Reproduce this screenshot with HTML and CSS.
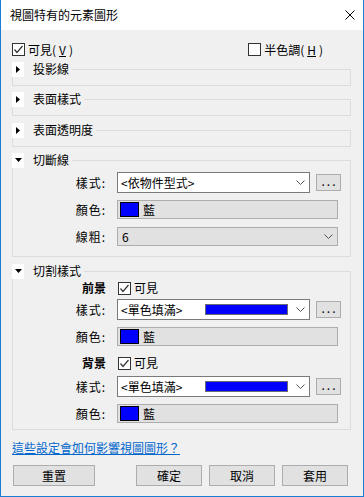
FILE: index.html
```html
<!DOCTYPE html>
<html lang="zh-Hant">

<head>
    <meta charset="UTF-8">
    <title>視圖特有的元素圖形</title>
    <link rel="stylesheet" href="styles.css">
</head>

<body>
    <div class="dialog">
        <!-- Title bar -->
        <div class="titlebar">
            <span class="title">視圖特有的元素圖形</span>
            <svg class="close" width="10" height="10" viewBox="0 0 10 10">
                <path d="M0.5 0.5 L9.5 9.5 M9.5 0.5 L0.5 9.5" stroke="#000" stroke-width="1" fill="none" />
            </svg>
        </div>

        <div class="content">
            <!-- Visible / halftone -->
            <div class="top-row">
                <label class="check">
                    <span class="box"><svg width="11" height="11" viewBox="0 0 11 11"><path d="M1.5 5.5 L4 8.5 L9.5 2" stroke="#333" stroke-width="1.2" fill="none" /></svg></span>
                    可見(<u>V</u>)
                </label>
                <label class="check halftone">
                    <span class="box"></span>
                    半色調(<u>H</u>)
                </label>
            </div>

            <!-- Collapsed groups -->
            <div class="group">
                <div class="group-head">
                    <span class="arrow"><svg width="4" height="7" viewBox="0 0 4 7"><path d="M0 0 L4 3.5 L0 7 Z" fill="#000" /></svg></span>
                    <span class="group-title">投影線</span>
                </div>
            </div>

            <div class="group">
                <div class="group-head">
                    <span class="arrow"><svg width="4" height="7" viewBox="0 0 4 7"><path d="M0 0 L4 3.5 L0 7 Z" fill="#000" /></svg></span>
                    <span class="group-title">表面樣式</span>
                </div>
            </div>

            <div class="group wide">
                <div class="group-head">
                    <span class="arrow"><svg width="4" height="7" viewBox="0 0 4 7"><path d="M0 0 L4 3.5 L0 7 Z" fill="#000" /></svg></span>
                    <span class="group-title">表面透明度</span>
                </div>
            </div>

            <!-- Cut lines -->
            <div class="group open cut-lines">
                <div class="group-head">
                    <span class="arrow"><svg width="7" height="4" viewBox="0 0 7 4"><path d="M0 0 L7 0 L3.5 4 Z" fill="#000" /></svg></span>
                    <span class="group-title">切斷線</span>
                </div>
                <div class="row first">
                    <span class="label">樣式:</span>
                    <div class="select">
                        <span>&lt;依物件型式&gt;</span>
                        <svg class="chevron" width="9" height="5" viewBox="0 0 9 5"><path d="M0.5 0.5 L4.5 4.5 L8.5 0.5" stroke="#555" fill="none" /></svg>
                    </div>
                    <button class="more">...</button>
                </div>
                <div class="row gap7">
                    <span class="label">顏色:</span>
                    <div class="field">
                        <span class="swatch"></span>
                        <span>藍</span>
                    </div>
                </div>
                <div class="row gap8">
                    <span class="label">線粗:</span>
                    <div class="field">
                        <span class="value">6</span>
                        <svg class="chevron" width="9" height="5" viewBox="0 0 9 5"><path d="M0.5 0.5 L4.5 4.5 L8.5 0.5" stroke="#555" fill="none" /></svg>
                    </div>
                </div>
            </div>

            <!-- Cut patterns -->
            <div class="group open wide cut-patterns">
                <div class="group-head">
                    <span class="arrow"><svg width="7" height="4" viewBox="0 0 7 4"><path d="M0 0 L7 0 L3.5 4 Z" fill="#000" /></svg></span>
                    <span class="group-title">切割樣式</span>
                </div>
                <div class="row sub-head">
                    <span class="label bold">前景</span>
                    <label class="check">
                        <span class="box"><svg width="11" height="11" viewBox="0 0 11 11"><path d="M1.5 5.5 L4 8.5 L9.5 2" stroke="#333" stroke-width="1.2" fill="none" /></svg></span>
                        可見
                    </label>
                </div>
                <div class="row gap4">
                    <span class="label">樣式:</span>
                    <div class="select">
                        <span>&lt;單色填滿&gt;</span>
                        <span class="fill"></span>
                        <svg class="chevron" width="9" height="5" viewBox="0 0 9 5"><path d="M0.5 0.5 L4.5 4.5 L8.5 0.5" stroke="#555" fill="none" /></svg>
                    </div>
                    <button class="more">...</button>
                </div>
                <div class="row gap7">
                    <span class="label">顏色:</span>
                    <div class="field">
                        <span class="swatch"></span>
                        <span>藍</span>
                    </div>
                </div>

                <div class="row sub-head bg">
                    <span class="label bold">背景</span>
                    <label class="check">
                        <span class="box"><svg width="11" height="11" viewBox="0 0 11 11"><path d="M1.5 5.5 L4 8.5 L9.5 2" stroke="#333" stroke-width="1.2" fill="none" /></svg></span>
                        可見
                    </label>
                </div>
                <div class="row gap6">
                    <span class="label">樣式:</span>
                    <div class="select">
                        <span>&lt;單色填滿&gt;</span>
                        <span class="fill"></span>
                        <svg class="chevron" width="9" height="5" viewBox="0 0 9 5"><path d="M0.5 0.5 L4.5 4.5 L8.5 0.5" stroke="#555" fill="none" /></svg>
                    </div>
                    <button class="more">...</button>
                </div>
                <div class="row gap7">
                    <span class="label">顏色:</span>
                    <div class="field">
                        <span class="swatch"></span>
                        <span>藍</span>
                    </div>
                </div>
            </div>

            <!-- Help link -->
            <a class="help" href="#">這些設定會如何影響視圖圖形？</a>
        </div>

        <!-- Dialog buttons -->
        <div class="buttons">
            <button class="btn reset">重置</button>
            <button class="btn ok">確定</button>
            <button class="btn">取消</button>
            <button class="btn">套用</button>
        </div>
    </div>
</body>

</html>
```

FILE: styles.css
```css
/* Reset */
* {
    margin: 0;
    padding: 0;
    box-sizing: border-box;
}

body {
    font-family: "Noto Sans CJK TC", "Noto Sans", sans-serif;
    font-size: 12px;
    line-height: 16px;
    color: #000;
    background: #fff;
}

/* Window */
.dialog {
    width: 364px;
    height: 497px;
    background: #f0f0f0;
    border: 1px solid #1a7fd4;
    border-top: none;
    display: flex;
    flex-direction: column;
}

.titlebar {
    height: 30px;
    background: #fff;
    display: flex;
    align-items: center;
    padding: 0 8px 0 9px;
}

.close {
    margin-left: auto;
}

.content {
    padding: 13px 12px 0 11px;
    display: flex;
    flex-direction: column;
}

/* Checkboxes */
.top-row {
    display: flex;
    align-items: center;
    height: 13px;
}

.check {
    display: flex;
    align-items: center;
    gap: 3px;
}

.halftone {
    margin-left: auto;
    margin-right: 28px;
}

.box {
    width: 13px;
    height: 13px;
    background: #fff;
    border: 1px solid #333;
    display: flex;
    align-items: center;
    justify-content: center;
}

u {
    text-decoration: underline;
}

/* Group boxes */
.group {
    border: 1px solid #dcdcdc;
    margin-top: 13px;
    padding-bottom: 8px;
}

.group.wide {
    margin-top: 14px;
}

.group-head {
    display: flex;
    align-items: center;
    height: 16px;
    margin: -9px 0 0 -1px;
}

.arrow {
    width: 12px;
    height: 15px;
    background: #fff;
    display: flex;
    align-items: center;
    justify-content: center;
}

.group-title {
    background: #f0f0f0;
    padding: 0 3px 0 9px;
}

.cut-lines {
    padding-bottom: 10px;
}

.cut-patterns {
    padding-bottom: 6px;
}

/* Form rows */
.row {
    display: flex;
    align-items: center;
}

.row.first {
    margin-top: 4px;
}

.gap4 {
    margin-top: 4px;
}

.gap6 {
    margin-top: 6px;
}

.gap7 {
    margin-top: 7px;
}

.gap8 {
    margin-top: 8px;
}

.sub-head {
    height: 14px;
    margin-top: 2px;
}

.sub-head.bg {
    margin-top: 10px;
}

.label {
    width: 93px;
    margin-right: 11px;
    text-align: right;
    letter-spacing: 1px;
}

.label.bold {
    font-weight: bold;
    letter-spacing: 0;
    margin-right: 12px;
}

.select {
    width: 193px;
    height: 21px;
    background: #fff;
    border: 1px solid #7a7a7a;
    display: flex;
    align-items: center;
    padding: 0 4px 0 3px;
}

.chevron {
    margin-left: auto;
}

.fill {
    width: 83px;
    height: 11px;
    background: #0000ff;
    border: 1px solid #6d6d6d;
    margin-left: auto;
    margin-right: 8px;
}

.fill + .chevron {
    margin-left: 0;
}

.more {
    width: 25px;
    height: 17px;
    margin-left: 6px;
    background: #e1e1e1;
    border: 1px solid #adadad;
    font-family: inherit;
    font-size: 12px;
    line-height: 12px;
    letter-spacing: 2px;
    padding-left: 2px;
    padding-bottom: 4px;
}

.field {
    width: 221px;
    height: 19px;
    background: #e1e1e1;
    border: 1px solid #adadad;
    display: flex;
    align-items: center;
    padding: 0 4px 0 2px;
    gap: 4px;
}

.swatch {
    width: 19px;
    height: 15px;
    background: #0000ff;
    border: 1px solid #000;
}

.value {
    padding-left: 2px;
}

/* Link and buttons */
.help {
    margin-top: 10px;
    color: #0066cc;
    text-decoration: underline;
    align-self: flex-start;
}

.buttons {
    display: flex;
    margin-top: 9px;
    padding-left: 12px;
    gap: 7px;
}

.btn {
    width: 66px;
    height: 21px;
    background: #e1e1e1;
    border: 1px solid #adadad;
    font-family: inherit;
    font-size: 12px;
    color: #000;
}

.btn.reset {
    width: 82px;
}

.btn.ok {
    margin-left: 34px;
}
```
